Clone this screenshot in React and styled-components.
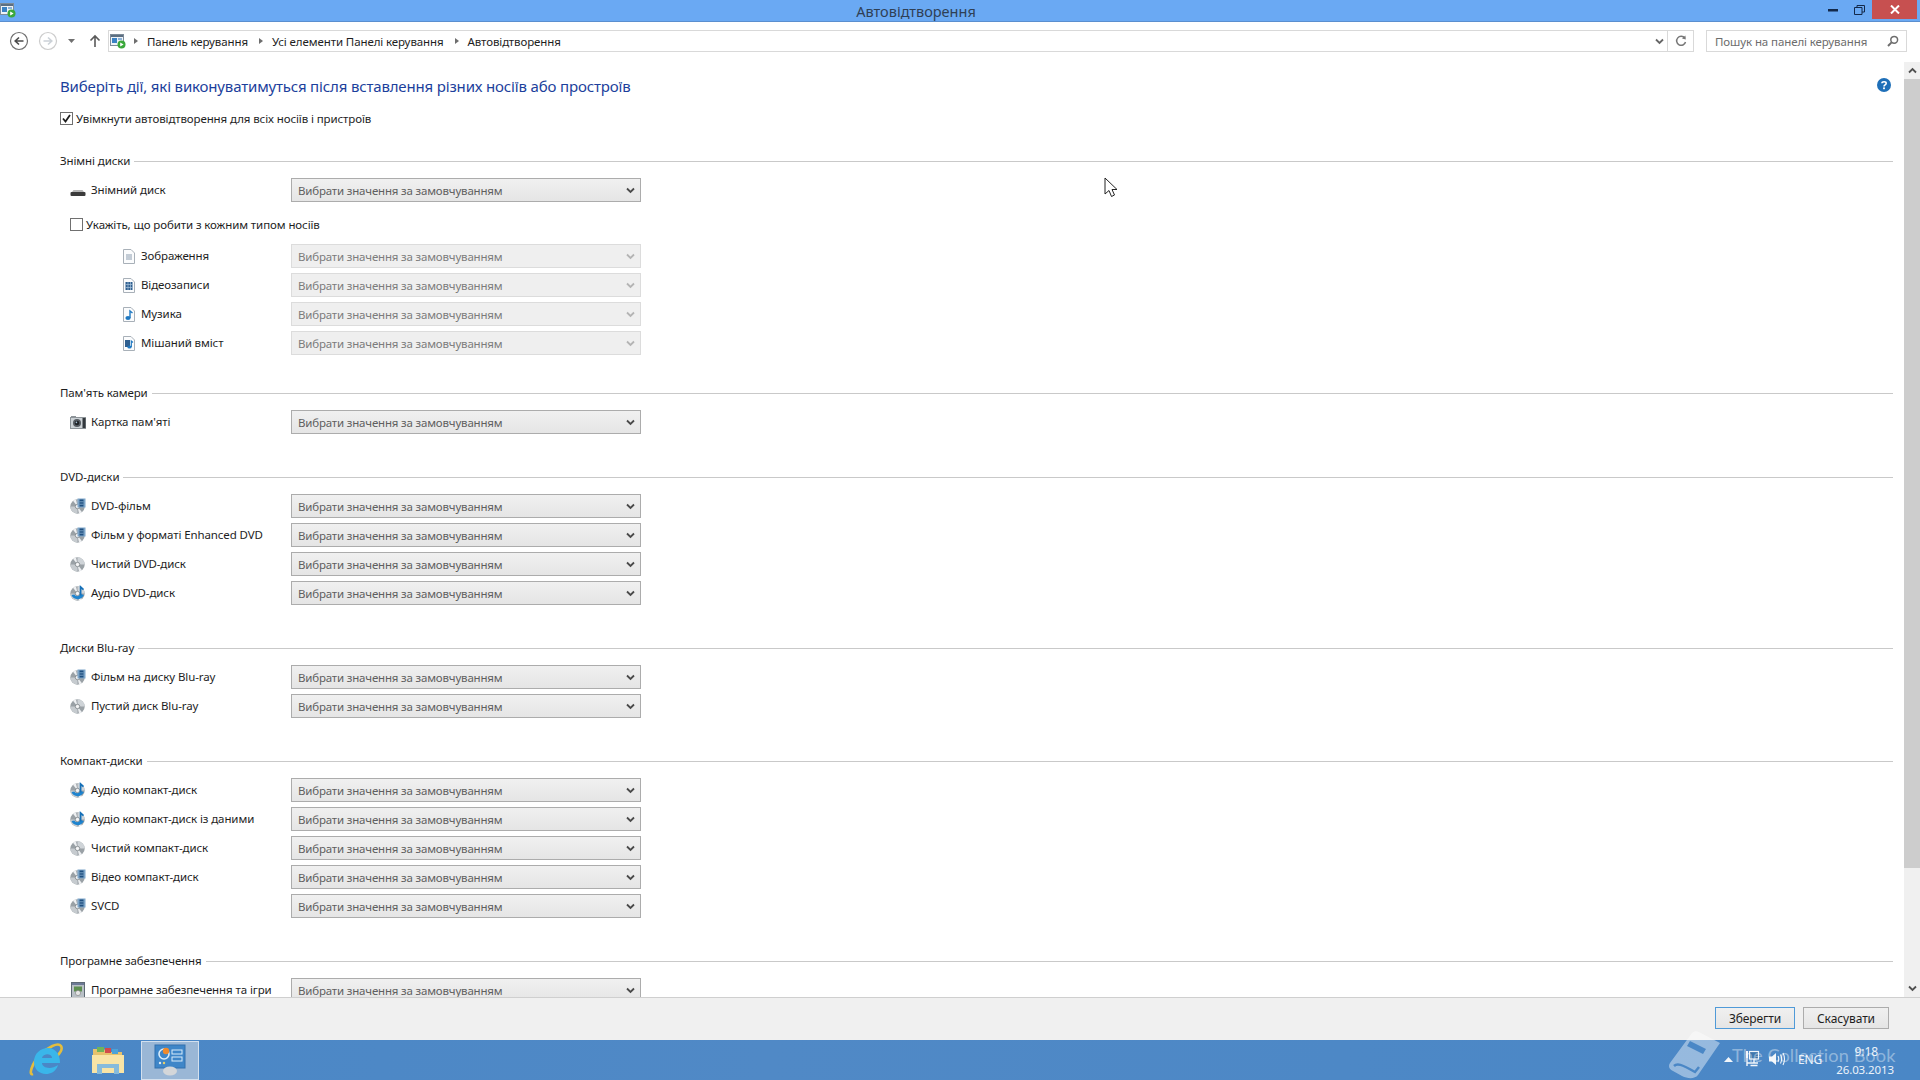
import React from 'react';
import styled, { createGlobalStyle } from 'styled-components';

const GlobalStyle = createGlobalStyle`
  html, body, #root {
    margin: 0;
    height: 100%;
    overflow: hidden;
  }
  body {
    font-family: 'Noto Sans', 'Open Sans', sans-serif;
    font-size: 11.5px;
    letter-spacing: -0.1px;
    color: #1e1e1e;
  }
`;

const Screen = styled.div`
  position: relative;
  display: flex;
  flex-direction: column;
  width: 1920px;
  height: 1080px;
  background: #fff;
  overflow: hidden;
`;

/* title bar */
const TitleBar = styled.div`
  display: flex;
  align-items: flex-start;
  height: 22px;
  flex: none;
  background: #6aa9f3;
  border-bottom: 1px solid #5b8fcf;
  box-sizing: border-box;
`;

const TitleIcon = styled.div`
  width: 18px;
  height: 18px;
  padding: 2px 0 0 0;
`;

const TitleText = styled.div`
  flex: 1;
  text-align: center;
  font-size: 14.5px;
  letter-spacing: 0;
  line-height: 22px;
  color: #2f4055;
  padding-right: 6px;
`;

const WinButtons = styled.div`
  display: flex;
  align-items: flex-start;
  width: 100px;
  height: 19px;
`;

const WinButton = styled.div`
  display: flex;
  align-items: center;
  justify-content: center;
  width: ${(p) => p.$w}px;
  height: 19px;
  background: ${(p) => (p.$close ? '#c75050' : 'transparent')};
`;

/* navigation */
const NavBar = styled.div`
  display: flex;
  align-items: center;
  height: 40px;
  flex: none;
  padding: 0 13px 2px 9px;
  box-sizing: border-box;
`;

const NavIcon = styled.div`
  display: flex;
  align-items: center;
  justify-content: center;
  width: ${(p) => p.$w}px;
  margin-left: ${(p) => p.$ml || 0}px;
  height: 22px;
`;

const AddressBox = styled.div`
  display: flex;
  align-items: center;
  flex: 1;
  height: 22px;
  margin-left: 3px;
  border: 1px solid #d9d9d9;
  box-sizing: border-box;
`;

const Crumbs = styled.div`
  display: flex;
  align-items: center;
  flex: 1;
  padding-left: 1px;
`;

const CrumbArrow = styled.span`
  width: 0;
  height: 0;
  margin: ${(p) => p.$m || '0 9px 0 11px'};
  border-left: 4px solid #6e6e6e;
  border-top: 3.5px solid transparent;
  border-bottom: 3.5px solid transparent;
`;

const Crumb = styled.span`
  color: #1e1e1e;
  white-space: nowrap;
`;

const AddressTool = styled.div`
  display: flex;
  align-items: center;
  justify-content: center;
  width: ${(p) => p.$w}px;
  height: 20px;
  border-left: ${(p) => (p.$split ? '1px solid #d9d9d9' : 'none')};
`;

const SearchBox = styled.div`
  display: flex;
  align-items: center;
  justify-content: space-between;
  width: 201px;
  height: 22px;
  margin-left: 12px;
  padding: 0 7px 0 8px;
  border: 1px solid #d9d9d9;
  box-sizing: border-box;
  color: #6d6d6d;
  white-space: nowrap;
`;

/* main pane */
const Body = styled.div`
  display: flex;
  height: 935px;
  flex: none;
`;

const Pane = styled.div`
  flex: 1;
  overflow: hidden;
  padding: 13px 11px 0 60px;
`;

const HeadingRow = styled.div`
  display: flex;
  align-items: center;
  justify-content: space-between;
  height: 22px;
  padding-right: 2px;

  svg {
    margin-bottom: 3px;
  }
`;

const Heading = styled.h1`
  margin: 0;
  font-size: 15px;
  letter-spacing: -0.16px;
  font-weight: 400;
  color: #1c3f9c;
  white-space: nowrap;
`;

const CheckRow = styled.div`
  display: flex;
  align-items: center;
  height: 16px;
  margin: ${(p) => p.$m};
  white-space: nowrap;
`;

const CheckBox = styled.span`
  display: flex;
  align-items: center;
  justify-content: center;
  width: 13px;
  height: 13px;
  margin-right: 3px;
  border: 1px solid #707070;
  box-sizing: border-box;
  background: #fff;
`;

const Section = styled.section`
  padding-bottom: ${(p) => (p.$tight ? 29 : 34)}px;
`;

const SectionTitle = styled.div`
  display: flex;
  align-items: center;
  height: 17px;
  margin-bottom: 9px;
  white-space: nowrap;

  &::after {
    content: '';
    flex: 1;
    height: 1px;
    margin: 2px 0 0 4px;
    background: #c9c9c9;
  }
`;

const Rows = styled.div`
  display: flex;
  flex-direction: column;
  gap: 5px;
`;

const Row = styled.div`
  display: flex;
  align-items: center;
  height: 24px;
  padding-left: ${(p) => (p.$sub ? 62 : 10)}px;
`;

const RowIcon = styled.div`
  display: flex;
  align-items: center;
  justify-content: center;
  width: ${(p) => (p.$sub ? 14 : 16)}px;
  height: 16px;
  flex: none;
`;

const RowLabel = styled.div`
  width: ${(p) => (p.$sub ? 155 : 205)}px;
  flex: none;
  padding-left: 5px;
  box-sizing: border-box;
  white-space: nowrap;
  padding-bottom: 1px;
`;

const Select = styled.div`
  display: flex;
  align-items: center;
  justify-content: space-between;
  width: 350px;
  height: 24px;
  padding: 0 5px 0 6px;
  box-sizing: border-box;
  border: 1px solid ${(p) => (p.$off ? '#dcdcdc' : '#acacac')};
  background: ${(p) => (p.$off ? '#efefef' : 'linear-gradient(#f0f0f0, #e5e5e5)')};
  color: ${(p) => (p.$off ? '#7c7c7c' : '#5f5f5f')};
  letter-spacing: -0.18px;
  white-space: nowrap;
`;

const SubRows = styled(Rows)`
  margin-top: 12px;
`;

/* scrollbar */
const Scrollbar = styled.div`
  display: flex;
  flex-direction: column;
  width: 16px;
  flex: none;
  background: #f0f0f0;
`;

const ScrollEnd = styled.div`
  display: flex;
  align-items: center;
  justify-content: center;
  height: 17px;
  flex: none;
`;

const ScrollThumb = styled.div`
  height: 789px;
  flex: none;
  background: #cdcdcd;
`;

const ScrollTrack = styled.div`
  flex: 1;
`;

/* footer */
const Footer = styled.div`
  display: flex;
  align-items: center;
  justify-content: flex-end;
  gap: 8px;
  height: 43px;
  flex: none;
  padding: 0 31px 2px 0;
  box-sizing: border-box;
  background: #f0f0f0;
  border-top: 1px solid #cfcfcf;
`;

const Button = styled.button`
  width: ${(p) => p.$w}px;
  height: 22px;
  padding: 0;
  font-family: inherit;
  font-size: 12px;
  letter-spacing: -0.1px;
  color: #1e1e1e;
  border: 1px solid ${(p) => (p.$primary ? '#4f9ad8' : '#acacac')};
  background: linear-gradient(#f0f0f0, #e5e5e5);
`;

/* taskbar */
const Taskbar = styled.div`
  display: flex;
  align-items: center;
  justify-content: space-between;
  height: 40px;
  flex: none;
  background: linear-gradient(90deg, #4a87c6, #5089c6 40%, #4a87c6);
`;

const TaskApps = styled.div`
  display: flex;
  align-items: center;
  padding-left: 17px;
  gap: 4px;
`;

const TaskApp = styled.div`
  display: flex;
  align-items: center;
  justify-content: center;
  width: 58px;
  height: 39px;
  box-sizing: border-box;
  border: ${(p) => (p.$active ? '1px solid #d3e0ee' : '1px solid transparent')};
  background: ${(p) => (p.$active ? '#9ab7d6' : 'transparent')};
`;

const Tray = styled.div`
  display: flex;
  align-items: center;
  height: 40px;
  padding-right: 26px;
  color: #eaf2fa;
`;

const TrayIcon = styled.div`
  display: flex;
  align-items: center;
  justify-content: center;
  width: ${(p) => p.$w}px;
  height: 40px;
  padding-bottom: 2px;
  box-sizing: border-box;
`;

const TrayLang = styled.div`
  width: 34px;
  padding-left: 12px;
  margin-right: 8px;
  padding-bottom: 2px;
  font-size: 12px;
`;

const Clock = styled.div`
  display: flex;
  flex-direction: column;
  align-items: flex-end;
  gap: 2px;
  width: 54px;
  padding-top: 2px;
  line-height: 16px;
  white-space: nowrap;
`;

const ClockTime = styled.span`
  font-size: 12px;
  padding-right: 16px;
`;

/* watermark lies over the footer and the taskbar */
const Watermark = styled.div`
  position: absolute;
  left: 1668px;
  top: 1030px;
  display: flex;
  align-items: flex-start;
  pointer-events: none;
`;

const WatermarkText = styled.span`
  margin: 13px 0 0 10px;
  font-family: 'Lato', sans-serif;
  font-size: 18.2px;
  letter-spacing: 0.1px;
  line-height: 24px;
  color: rgba(255, 255, 255, 0.4);
  white-space: nowrap;
`;

const Cursor = styled.svg`
  position: absolute;
  left: 1104px;
  top: 177px;
`;

/* icons */
const AutoplayIcon = () => (
  <svg width="16" height="16" viewBox="0 0 16 16">
    <rect x="0.5" y="1.5" width="13" height="11" fill="#eef3f8" stroke="#7d8b99" />
    <rect x="1" y="2" width="12" height="2" fill="#5c6f82" />
    <rect x="2" y="5" width="5" height="5" fill="#3a82c4" />
    <rect x="8" y="5" width="4" height="2" fill="#8ab2d8" />
    <circle cx="11.5" cy="11.5" r="4" fill="#3ba83b" />
    <path d="M10.2 9.4 L13.6 11.5 L10.2 13.6 Z" fill="#fff" />
  </svg>
);

const BackIcon = ({ faded }) => (
  <svg width="20" height="20" viewBox="0 0 20 20" opacity={faded ? 0.35 : 1}>
    <circle cx="10" cy="10" r="8.5" fill="#fff" stroke="#6f6f6f" strokeWidth="1.2" />
    {faded ? (
      <path d="M5.5 10 H13.5 M10 6.5 L13.8 10 L10 13.5" fill="none" stroke="#6f7f90" strokeWidth="1.6" />
    ) : (
      <path d="M14.5 10 H6.5 M10 6.5 L6.2 10 L10 13.5" fill="none" stroke="#4a4a4a" strokeWidth="1.6" />
    )}
  </svg>
);

const Chevron = ({ color = '#4a4a4a' }) => (
  <svg width="9" height="7" viewBox="0 0 9 7">
    <path d="M1 1.5 L4.5 5 L8 1.5" fill="none" stroke={color} strokeWidth="1.8" />
  </svg>
);

const ChevronUp = ({ color = '#505050' }) => (
  <svg width="9" height="7" viewBox="0 0 9 7">
    <path d="M1 5.5 L4.5 2 L8 5.5" fill="none" stroke={color} strokeWidth="1.8" />
  </svg>
);

const RefreshIcon = () => (
  <svg width="12" height="12" viewBox="0 0 12 12">
    <path d="M9.8 3.2 A4.5 4.5 0 1 0 10.5 7" fill="none" stroke="#777" strokeWidth="1.5" />
    <path d="M7 3.6 L10.8 4.4 L10.4 0.6 Z" fill="#777" />
  </svg>
);

const SearchIcon = () => (
  <svg width="12" height="12" viewBox="0 0 12 12">
    <circle cx="7.2" cy="4.8" r="3.4" fill="none" stroke="#6d6d6d" strokeWidth="1.5" />
    <path d="M4.6 7.4 L1 11" stroke="#6d6d6d" strokeWidth="2" />
  </svg>
);

const HelpIcon = () => (
  <svg width="14" height="14" viewBox="0 0 14 14">
    <circle cx="7" cy="7" r="7" fill="#1e6fb8" />
    <path d="M4.9 5.2 C5 3.2 9.2 3.1 9.2 5.3 C9.2 6.9 7 6.8 7 8.4" fill="none" stroke="#fff" strokeWidth="1.6" />
    <rect x="6.1" y="9.4" width="1.8" height="1.8" fill="#fff" />
  </svg>
);

const DriveIcon = () => (
  <svg width="16" height="16" viewBox="0 0 16 16">
    <path d="M2 10 L3.5 8 H12.5 L14 10 Z" fill="#b5b5b5" />
    <rect x="0.5" y="10" width="15" height="4" rx="1" fill="#3b3b3b" />
  </svg>
);

const FileIcon = ({ kind }) => (
  <svg width="12" height="15" viewBox="0 0 12 15">
    <path d="M0.5 0.5 H8 L11.5 4 V14.5 H0.5 Z" fill="#fbfcfd" stroke="#a8b0b8" />
    {kind === 'image' && <rect x="3" y="5" width="6" height="6" fill="#c3ccd6" />}
    {kind === 'video' && (
      <g>
        <rect x="2.5" y="4" width="7" height="8" fill="#2f5f8f" />
        <path d="M2.5 6.5 H9.5 M2.5 9.5 H9.5 M5 4 V12 M7.5 4 V12" stroke="#a9c4dd" strokeWidth="0.7" />
      </g>
    )}
    {kind === 'music' && (
      <g>
        <ellipse cx="5" cy="11" rx="2.6" ry="1.9" fill="#1f78c1" />
        <path d="M7 11 V4 L9.5 6" fill="none" stroke="#1f78c1" strokeWidth="1.4" />
      </g>
    )}
    {kind === 'mixed' && (
      <g>
        <rect x="2" y="4" width="5" height="7" fill="#2f5f8f" />
        <ellipse cx="6.5" cy="11" rx="2.2" ry="1.6" fill="#1f78c1" />
        <path d="M8.3 11 V5 L10 6.5" fill="none" stroke="#1f78c1" strokeWidth="1.2" />
      </g>
    )}
  </svg>
);

const DiscIcon = ({ kind }) => (
  <svg width="16" height="16" viewBox="0 0 16 16">
    <circle cx="7.5" cy="8.5" r="7.2" fill="#9aa1a6" />
    <path d="M7.5 1.3 A7.2 7.2 0 0 1 14.7 8.5 L7.5 8.5 Z" fill="#cfd4d8" />
    <path d="M0.3 8.5 A7.2 7.2 0 0 0 7.5 15.7 L7.5 8.5 Z" fill="#c6cbcf" />
    <path d="M7.5 8.5 L3 2.8 A7.2 7.2 0 0 1 6 1.5 Z" fill="#eef0f2" />
    <path d="M7.5 8.5 L12 14.2 A7.2 7.2 0 0 1 9 15.5 Z" fill="#eef0f2" />
    <circle cx="7.5" cy="8.5" r="2.2" fill="#f4f5f6" stroke="#6f757a" strokeWidth="0.7" />
    {kind === 'film' && (
      <g>
        <rect x="7.5" y="0.5" width="8" height="9" fill="#7ea6c9" />
        <rect x="9.5" y="1.5" width="4" height="7" fill="#1f4f80" />
        <path d="M9.5 3.8 H13.5 M9.5 6.2 H13.5" stroke="#9cc0de" strokeWidth="0.7" />
      </g>
    )}
    {kind === 'audio' && (
      <g>
        <path d="M1.5 10 C3 15 11 16 14 10 L10.5 9 C9.5 11.5 5.5 12 4.5 9.5 Z" fill="#1f84cf" />
        <path d="M10.6 10.5 V2 L13.5 4.6" fill="none" stroke="#1670b8" strokeWidth="1.7" />
      </g>
    )}
  </svg>
);

const CameraIcon = () => (
  <svg width="16" height="14" viewBox="0 0 16 14">
    <rect x="0.5" y="2.5" width="15" height="11" fill="#ccd2d6" stroke="#8d9499" />
    <rect x="1" y="1" width="5" height="2" fill="#8d9499" />
    <rect x="12.5" y="3" width="3" height="10" fill="#33383d" />
    <circle cx="7" cy="8" r="4" fill="#565c62" />
    <circle cx="7" cy="8" r="2.3" fill="#1f2327" />
    <circle cx="6.4" cy="7.4" r="0.8" fill="#a6bfd4" />
  </svg>
);

const SoftwareIcon = () => (
  <svg width="16" height="16" viewBox="0 0 16 16">
    <rect x="1.5" y="0.5" width="13" height="15" fill="#b9c0c6" stroke="#5e6a75" />
    <rect x="2" y="1" width="12" height="2" fill="#6d7a96" />
    <rect x="4" y="4.5" width="8" height="5" fill="#5d8f4f" />
    <circle cx="8" cy="11" r="2.6" fill="#e6e6e6" stroke="#7c7c7c" strokeWidth="0.6" />
  </svg>
);

const IeIcon = () => (
  <svg width="34" height="34" viewBox="0 0 34 34">
    <path d="M4 31 C-1 33 3 20 11 12 C19 4 29 -1 32 3 C34 6 30 11 28 13" fill="none" stroke="#e3bd3e" strokeWidth="2.6" />
    <path d="M5 19 C5 10 12 5 19 5 C27 5 31 12 31 20 H13 C13 25 22 27 29 22 C27 29 21 31 17 31 C10 31 5 26 5 19 Z M13 15 H23 C23 10 14 10 13 15 Z" fill="#3ab6ea" fillRule="evenodd" />
  </svg>
);

const ExplorerIcon = () => (
  <svg width="34" height="32" viewBox="0 0 34 32">
    <path d="M2 5 H13 L15 8 H31 V29 H2 Z" fill="#e6c26c" />
    <rect x="6" y="3" width="7" height="5" fill="#6fb55a" />
    <rect x="14" y="4" width="6" height="5" fill="#d24b4b" />
    <rect x="21" y="5" width="6" height="5" fill="#4ba3d8" />
    <path d="M1 11 H33 V29 H1 Z" fill="#f8e4a6" />
    <path d="M6 30 V20 H28 V30 H23 V24 H11 V30 Z" fill="#86bbdc" />
  </svg>
);

const PanelIcon = () => (
  <svg width="34" height="34" viewBox="0 0 34 34">
    <rect x="2" y="2" width="30" height="23" fill="#3f86c8" stroke="#3270ad" />
    <circle cx="11" cy="11" r="5" fill="none" stroke="#d9ecfa" strokeWidth="1.6" />
    <circle cx="13" cy="8" r="3.2" fill="#f08a2c" />
    <rect x="19" y="7" width="10" height="4" fill="#3f86c8" stroke="#d9ecfa" />
    <rect x="19" y="14" width="10" height="4" fill="#3f86c8" stroke="#d9ecfa" />
    <circle cx="7" cy="20" r="1.2" fill="#d9ecfa" />
    <circle cx="11" cy="20" r="1.2" fill="#e8d06a" />
    <ellipse cx="17" cy="28" rx="7" ry="4.5" fill="#d3d6d9" />
  </svg>
);

const NetworkIcon = () => (
  <svg width="16" height="18" viewBox="0 0 16 18">
    <rect x="5.5" y="1.5" width="9" height="7.5" fill="#3f77ad" stroke="#f2f6fa" strokeWidth="1.2" />
    <path d="M2 1 H4 V8 H2 Z" fill="#f2f6fa" />
    <path d="M3 8 V16 M3 13 H14 M10 9 V13 M6.5 15.5 H13.5" stroke="#f2f6fa" strokeWidth="1.4" fill="none" />
  </svg>
);

const VolumeIcon = () => (
  <svg width="18" height="16" viewBox="0 0 18 16">
    <path d="M1 5.5 H4 L8 2 V14 L4 10.5 H1 Z" fill="#f2f6fa" />
    <path d="M10 5 C11 7 11 9 10 11 M12.5 3.5 C14 6.5 14 9.5 12.5 12.5 M15 2 C17 6 17 10 15 14" fill="none" stroke="#f2f6fa" strokeWidth="1.1" />
  </svg>
);

const BookMark = () => (
  <svg width="54" height="50" viewBox="0 0 54 50" opacity="0.42">
    <path d="M2 33 L24 3 C26 1 29 1 31 2 L52 13 L30 45 C27 49 20 49 14 46 L5 41 C1 39 0 36 2 33 Z" fill="#fff" />
    <path d="M6 36 C9 33 13 34 27 42 L31 37" fill="none" stroke="#4a87c6" strokeWidth="2.5" />
    <path d="M22 11 L38 19 L35 24 L19 16 Z" fill="#4a87c6" />
  </svg>
);

const groups = [
  {
    title: 'Пам\'ять камери',
    rows: [{ label: 'Картка пам\'яті', icon: <CameraIcon /> }],
  },
  {
    title: 'DVD-диски',
    rows: [
      { label: 'DVD-фільм', icon: <DiscIcon kind="film" /> },
      { label: 'Фільм у форматі Enhanced DVD', icon: <DiscIcon kind="film" /> },
      { label: 'Чистий DVD-диск', icon: <DiscIcon /> },
      { label: 'Аудіо DVD-диск', icon: <DiscIcon kind="audio" /> },
    ],
  },
  {
    title: 'Диски Blu-ray',
    rows: [
      { label: 'Фільм на диску Blu-ray', icon: <DiscIcon kind="film" /> },
      { label: 'Пустий диск Blu-ray', icon: <DiscIcon /> },
    ],
  },
  {
    title: 'Компакт-диски',
    rows: [
      { label: 'Аудіо компакт-диск', icon: <DiscIcon kind="audio" /> },
      { label: 'Аудіо компакт-диск із даними', icon: <DiscIcon kind="audio" /> },
      { label: 'Чистий компакт-диск', icon: <DiscIcon /> },
      { label: 'Відео компакт-диск', icon: <DiscIcon kind="film" /> },
      { label: 'SVCD', icon: <DiscIcon kind="film" /> },
    ],
  },
  {
    title: 'Програмне забезпечення',
    rows: [{ label: 'Програмне забезпечення та ігри', icon: <SoftwareIcon /> }],
  },
];

const subRows = [
  { label: 'Зображення', kind: 'image' },
  { label: 'Відеозаписи', kind: 'video' },
  { label: 'Музика', kind: 'music' },
  { label: 'Мішаний вміст', kind: 'mixed' },
];

const DEFAULT_VALUE = 'Вибрати значення за замовчуванням';

const Dropdown = ({ off }) => (
  <Select $off={off}>
    {DEFAULT_VALUE}
    <Chevron color={off ? '#b4b4b4' : '#4a4a4a'} />
  </Select>
);

export default function App() {
  return (
    <Screen>
      <GlobalStyle />
      <TitleBar>
        <TitleIcon><AutoplayIcon /></TitleIcon>
        <TitleText>Автовідтворення</TitleText>
        <WinButtons>
          <WinButton $w={26}>
            <svg width="10" height="4" viewBox="0 0 10 4"><rect y="1" width="10" height="2.5" fill="#13294a" /></svg>
          </WinButton>
          <WinButton $w={26}>
            <svg width="11" height="10" viewBox="0 0 11 10">
              <path d="M0.5 2.5 H8 V9.5 H0.5 Z M3 2.5 V0.5 H10.5 V7 H8" fill="none" stroke="#13294a" />
            </svg>
          </WinButton>
          <WinButton $w={45} $close>
            <svg width="10" height="9" viewBox="0 0 10 9">
              <path d="M1 0.5 L9 8.5 M9 0.5 L1 8.5" stroke="#fff" strokeWidth="2" />
            </svg>
          </WinButton>
        </WinButtons>
      </TitleBar>

      <NavBar>
        <NavIcon $w={20}><BackIcon /></NavIcon>
        <NavIcon $w={20} $ml={9}><BackIcon faded /></NavIcon>
        <NavIcon $w={10} $ml={9}>
          <svg width="8" height="5" viewBox="0 0 8 5"><path d="M0 0 H7 L3.5 4 Z" fill="#707070" /></svg>
        </NavIcon>
        <NavIcon $w={20} $ml={8}>
          <svg width="12" height="14" viewBox="0 0 12 14">
            <path d="M6 13 V2 M1.5 6.5 L6 2 L10.5 6.5" fill="none" stroke="#5a5a5a" strokeWidth="1.6" />
          </svg>
        </NavIcon>
        <AddressBox>
          <Crumbs>
            <AutoplayIcon />
            <CrumbArrow $m="0 9px 0 8px" />
            <Crumb>Панель керування</Crumb>
            <CrumbArrow />
            <Crumb>Усі елементи Панелі керування</Crumb>
            <CrumbArrow />
            <Crumb>Автовідтворення</Crumb>
          </Crumbs>
          <AddressTool $w={16}><Chevron color="#666" /></AddressTool>
          <AddressTool $w={25} $split><RefreshIcon /></AddressTool>
        </AddressBox>
        <SearchBox>
          Пошук на панелі керування
          <SearchIcon />
        </SearchBox>
      </NavBar>

      <Body>
        <Pane>
          <HeadingRow>
            <Heading>Виберіть дії, які виконуватимуться після вставлення різних носіїв або простроїв</Heading>
            <HelpIcon />
          </HeadingRow>
          <CheckRow $m="13px 0 26px">
            <CheckBox>
              <svg width="9" height="9" viewBox="0 0 9 9">
                <path d="M1 4.5 L3.5 7.5 L8 1" fill="none" stroke="#1e1e1e" strokeWidth="1.8" />
              </svg>
            </CheckBox>
            Увімкнути автовідтворення для всіх носіїв і пристроїв
          </CheckRow>

          <Section $tight>
            <SectionTitle>Знімні диски</SectionTitle>
            <Row>
              <RowIcon><DriveIcon /></RowIcon>
              <RowLabel>Знімний диск</RowLabel>
              <Dropdown />
            </Row>
            <CheckRow $m="14px 0 0 10px">
              <CheckBox />
              Укажіть, що робити з кожним типом носіїв
            </CheckRow>
            <SubRows>
              {subRows.map((r) => (
                <Row $sub key={r.label}>
                  <RowIcon $sub><FileIcon kind={r.kind} /></RowIcon>
                  <RowLabel $sub>{r.label}</RowLabel>
                  <Dropdown off />
                </Row>
              ))}
            </SubRows>
          </Section>

          {groups.map((g) => (
            <Section key={g.title}>
              <SectionTitle>{g.title}</SectionTitle>
              <Rows>
                {g.rows.map((r) => (
                  <Row key={r.label}>
                    <RowIcon>{r.icon}</RowIcon>
                    <RowLabel>{r.label}</RowLabel>
                    <Dropdown />
                  </Row>
                ))}
              </Rows>
            </Section>
          ))}
        </Pane>
        <Scrollbar>
          <ScrollEnd><ChevronUp /></ScrollEnd>
          <ScrollThumb />
          <ScrollTrack />
          <ScrollEnd><Chevron color="#505050" /></ScrollEnd>
        </Scrollbar>
      </Body>

      <Footer>
        <Button $w={80} $primary>Зберегти</Button>
        <Button $w={86}>Скасувати</Button>
      </Footer>

      <Taskbar>
        <TaskApps>
          <TaskApp><IeIcon /></TaskApp>
          <TaskApp><ExplorerIcon /></TaskApp>
          <TaskApp $active><PanelIcon /></TaskApp>
        </TaskApps>
        <Tray>
          <TrayIcon $w={16}>
            <svg width="9" height="5" viewBox="0 0 9 5"><path d="M0 5 L4.5 0 L9 5 Z" fill="#f2f6fa" /></svg>
          </TrayIcon>
          <TrayIcon $w={32}><NetworkIcon /></TrayIcon>
          <TrayIcon $w={18}><VolumeIcon /></TrayIcon>
          <TrayLang>ENG</TrayLang>
          <Clock>
            <ClockTime>9:18</ClockTime>
            <span>26.03.2013</span>
          </Clock>
        </Tray>
      </Taskbar>

      <Watermark>
        <BookMark />
        <WatermarkText>The Collection Book</WatermarkText>
      </Watermark>

      <Cursor width="14" height="21" viewBox="0 0 14 21">
        <path d="M1 1 V17 L5 13.5 L7.5 19.5 L10.5 18 L8 12.5 H13 Z" fill="#fff" stroke="#222" strokeWidth="1" />
      </Cursor>
    </Screen>
  );
}
